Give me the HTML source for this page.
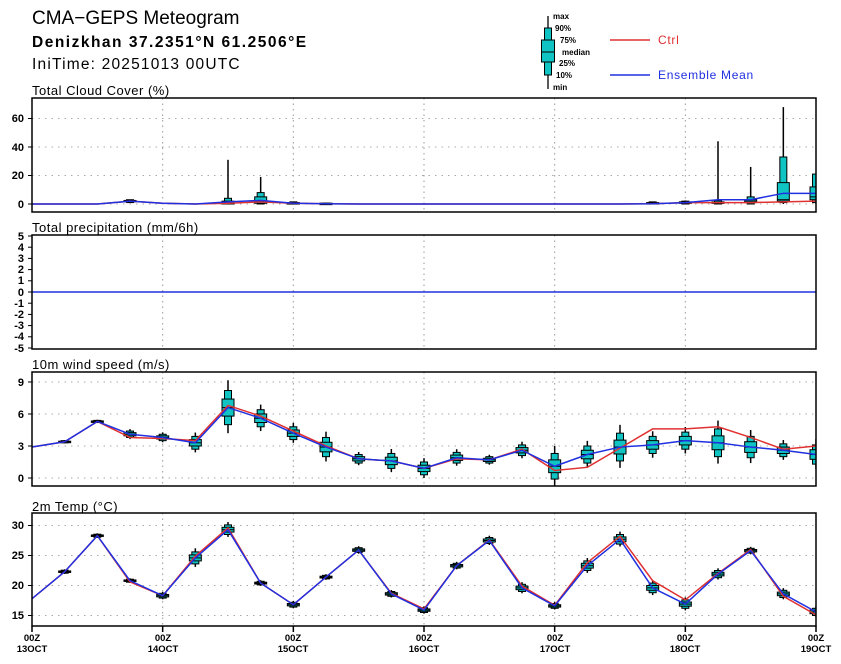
<!DOCTYPE html>
<html><head><meta charset="utf-8"><style>
html,body{margin:0;padding:0;background:#fff;}
svg{display:block;font-family:"Liberation Sans","DejaVu Sans",sans-serif;}
.t{font-size:11px;font-weight:bold;fill:#000}
.x{font-size:9.5px;font-weight:bold;fill:#000}
.pt{font-size:13px;fill:#000;letter-spacing:0.5px}
.lg{font-size:8px;font-weight:bold;fill:#000}
</style></head><body>
<svg id="s" width="841" height="664" viewBox="0 0 841 664" xmlns="http://www.w3.org/2000/svg">
<text x="32" y="24" style="font-size:19px">CMA−GEPS Meteogram</text>
<text x="32" y="47" style="font-size:15.5px;font-weight:bold;letter-spacing:1.5px">Denizkhan 37.2351°N 61.2506°E</text>
<text x="32" y="69" style="font-size:15.5px;letter-spacing:1.2px">IniTime: 20251013 00UTC</text>
<text x="32" y="95" class="pt">Total Cloud Cover (%)</text>
<text x="32" y="232" class="pt">Total precipitation (mm/6h)</text>
<text x="32" y="369" class="pt">10m wind speed (m/s)</text>
<text x="32" y="511" class="pt">2m Temp (°C)</text>
<!-- legend -->
<line x1="548" y1="16" x2="548" y2="89" stroke="#000" stroke-width="1.3"/>
<rect x="544.5" y="28" width="7" height="47" fill="#10c4c4" stroke="#000"/>
<rect x="541.5" y="40" width="13" height="22" fill="#10c4c4" stroke="#000"/>
<line x1="541.5" y1="52" x2="554.5" y2="52" stroke="#000"/>
<text x="553" y="19" class="lg">max</text>
<text x="555" y="31" class="lg">90%</text>
<text x="560" y="43" class="lg">75%</text>
<text x="562" y="55" class="lg">median</text>
<text x="559" y="66" class="lg">25%</text>
<text x="556" y="78" class="lg">10%</text>
<text x="553" y="90" class="lg">min</text>
<line x1="610" y1="40" x2="650" y2="40" stroke="#e03030" stroke-width="1.5"/>
<text x="658" y="44" style="font-size:12px;fill:#e03030;letter-spacing:0.7px">Ctrl</text>
<line x1="610" y1="75" x2="650" y2="75" stroke="#2030e0" stroke-width="1.5"/>
<text x="658" y="79" style="font-size:12px;fill:#2030e0;letter-spacing:0.7px">Ensemble Mean</text>
<!-- y labels -->
<g class="t" text-anchor="end">
<text x="24" y="122">60</text><text x="24" y="151">40</text><text x="24" y="179">20</text><text x="24" y="208">0</text>
<text x="24" y="240">5</text><text x="24" y="251">4</text><text x="24" y="262">3</text><text x="24" y="273">2</text><text x="24" y="284">1</text><text x="24" y="296">0</text><text x="24" y="307">-1</text><text x="24" y="318">-2</text><text x="24" y="329">-3</text><text x="24" y="340">-4</text><text x="24" y="352">-5</text>
<text x="24" y="386">9</text><text x="24" y="418">6</text><text x="24" y="450">3</text><text x="24" y="482">0</text>
<text x="24" y="529">30</text><text x="24" y="559">25</text><text x="24" y="589">20</text><text x="24" y="619">15</text>
</g>
<g class="x" text-anchor="middle">
<text x="32" y="641">00Z</text><text x="32" y="652">13OCT</text>
<text x="163" y="641">00Z</text><text x="163" y="652">14OCT</text>
<text x="293" y="641">00Z</text><text x="293" y="652">15OCT</text>
<text x="424" y="641">00Z</text><text x="424" y="652">16OCT</text>
<text x="555" y="641">00Z</text><text x="555" y="652">17OCT</text>
<text x="685" y="641">00Z</text><text x="685" y="652">18OCT</text>
<text x="816" y="641">00Z</text><text x="816" y="652">19OCT</text>
</g>
<g id="plots"></g>
</svg>
<script>
var NS="http://www.w3.org/2000/svg",G=document.getElementById("plots");
function el(n,a){var e=document.createElementNS(NS,n);for(var k in a)e.setAttribute(k,a[k]);G.appendChild(e);return e;}
function X(i){return 32+i*784/24;}
var panels=[
 {top:98,bot:212,y0:204,k:1.425,ticks:[0,20,40,60]},
 {top:235,bot:349,y0:292,k:11.2,ticks:[-5,-4,-3,-2,-1,0,1,2,3,4,5]},
 {top:372,bot:486,y0:478,k:10.67,ticks:[0,3,6,9]},
 {top:513,bot:626,y0:615.5,k:6,ticks:[15,20,25,30],base:15}
];
panels.forEach(function(p,pi){
 var b=p.base||0;p.Y=function(v){return p.y0-(v-b)*p.k;};
 for(var d=1;d<6;d++)el("line",{x1:X(d*4),x2:X(d*4),y1:p.top,y2:p.bot,stroke:"#999","stroke-dasharray":"1.5,4"});
 p.ticks.forEach(function(t){var y=p.Y(t);if(pi!=1)el("line",{x1:32,x2:816,y1:y,y2:y,stroke:"#aaa","stroke-dasharray":"1.5,5"});el("line",{x1:28,x2:32,y1:y,y2:y,stroke:"#000"});});
 var c=el("clipPath",{id:"c"+pi});var r=document.createElementNS(NS,"rect");r.setAttribute("x",32);r.setAttribute("y",p.top);r.setAttribute("width",784);r.setAttribute("height",p.bot-p.top);c.appendChild(r);
});
for(var d=0;d<=6;d++)el("line",{x1:X(d*4),x2:X(d*4),y1:626,y2:632,stroke:"#000","stroke-width":1.5});
function boxes(p,pi,B){var g=el("g",{"clip-path":"url(#c"+pi+")"});var save=G;G=g;
 B.forEach(function(b,i){if(!b)return;var x=X(i),Y=p.Y;
  el("line",{x1:x,x2:x,y1:Y(b[0]),y2:Y(b[6]),stroke:"#000","stroke-width":1.5});
  el("rect",{x:x-3.5,y:Y(b[5]),width:7,height:Math.max(1,Y(b[1])-Y(b[5])),fill:"#10c4c4",stroke:"#000"});
  el("rect",{x:x-6,y:Y(b[4]),width:12,height:Math.max(1.5,Y(b[2])-Y(b[4])),fill:"#10c4c4",stroke:"#000"});
  el("line",{x1:x-6,x2:x+6,y1:Y(b[3]),y2:Y(b[3]),stroke:"#000"});
 });G=save;}
function line(p,pi,v,col){var pts=v.map(function(a,i){return X(i)+","+p.Y(a);}).join(" ");
 el("polyline",{points:pts,fill:"none",stroke:col,"stroke-width":1.5,"clip-path":"url(#c"+pi+")"});}
function gen(m,s){return m.map(function(a,i){var q=s[i];if(q==0)return null;return [a-1.5*q,a-q,a-0.5*q,a,a+0.5*q,a+q,a+1.6*q];});}
var P=panels[0],cm=[0,0,0,2,0.5,0,1.5,2.5,0.5,0.2,0,0,0,0,0,0,0,0,0,0.2,1,3,3,7.5,7.5],cc=[0,0,0,2,0.5,0,0.5,1.5,0.5,0.2,0,0,0,0,0,0,0,0,0,0.2,1,1,1,1.5,2];
var cb=[];cb[3]=[1,1,1.5,2,2.5,3,3];cb[6]=[0,0,0,0.5,2,4,31];cb[7]=[0,0,0.5,2,5,8,19];cb[8]=[0,0,0,0.5,1,1.5,1.5];cb[9]=[0,0,0,0.3,0.6,0.6,0.8];
cb[19]=[0,0,0,0.5,1,1.5,1.5];cb[20]=[0,0,0.5,1,1.5,2,2.5];cb[21]=[0,0,0.5,1,1.5,2.5,44];cb[22]=[0,0,1,2,3,5,26];cb[23]=[0,1,2,3,15,33,68];cb[24]=[0,1,3,5,12,21,21];
boxes(P,0,cb);line(P,0,cc,"#e03030");line(P,0,cm,"#2030e0");
P=panels[1];el("line",{x1:32,x2:816,y1:292,y2:292,stroke:"#2030e0","stroke-width":1.5});
P=panels[2];
var wm=[2.9,3.4,5.3,4.1,3.8,3.3,6.6,5.6,4.2,2.9,1.8,1.6,0.9,1.9,1.7,2.6,1.1,2.2,2.9,3.1,3.5,3.3,2.9,2.6,2.2];
var wc=[2.9,3.4,5.3,3.8,3.7,3.5,6.8,5.8,4.4,3.0,1.8,1.6,0.9,1.8,1.7,2.7,0.7,1.0,2.8,4.6,4.6,4.8,3.8,2.7,3.0];
var ws=[0,0.1,0.1,0.3,0.3,0.6,1.6,0.8,0.6,0.9,0.4,0.7,0.6,0.5,0.3,0.5,1.2,0.8,1.3,0.8,0.8,1.3,1.0,0.6,0.9];
boxes(P,2,gen(wm,ws));line(P,2,wc,"#e03030");line(P,2,wm,"#2030e0");
P=panels[3];
var tm=[17.8,22.3,28.3,20.8,18.3,24.6,29.3,20.4,16.8,21.4,25.9,18.6,15.9,23.3,27.5,19.6,16.6,23.3,27.7,19.6,16.9,21.9,25.8,18.6,15.6];
var tc=[17.8,22.3,28.3,20.6,18.3,24.9,29.6,20.4,16.8,21.4,25.9,18.7,16.1,23.3,27.6,19.9,16.7,23.8,28.2,20.8,17.6,22.0,26.0,18.2,15.1];
var ts=[0,0.25,0.25,0.25,0.4,1.0,0.8,0.3,0.4,0.3,0.4,0.4,0.4,0.4,0.5,0.6,0.4,0.8,0.8,0.8,0.7,0.6,0.4,0.6,0.6];
boxes(P,3,gen(tm,ts));line(P,3,tc,"#e03030");line(P,3,tm,"#2030e0");
panels.forEach(function(p){el("rect",{x:32,y:p.top,width:784,height:p.bot-p.top,fill:"none",stroke:"#000","stroke-width":1.5});});
</script>
</body></html>
